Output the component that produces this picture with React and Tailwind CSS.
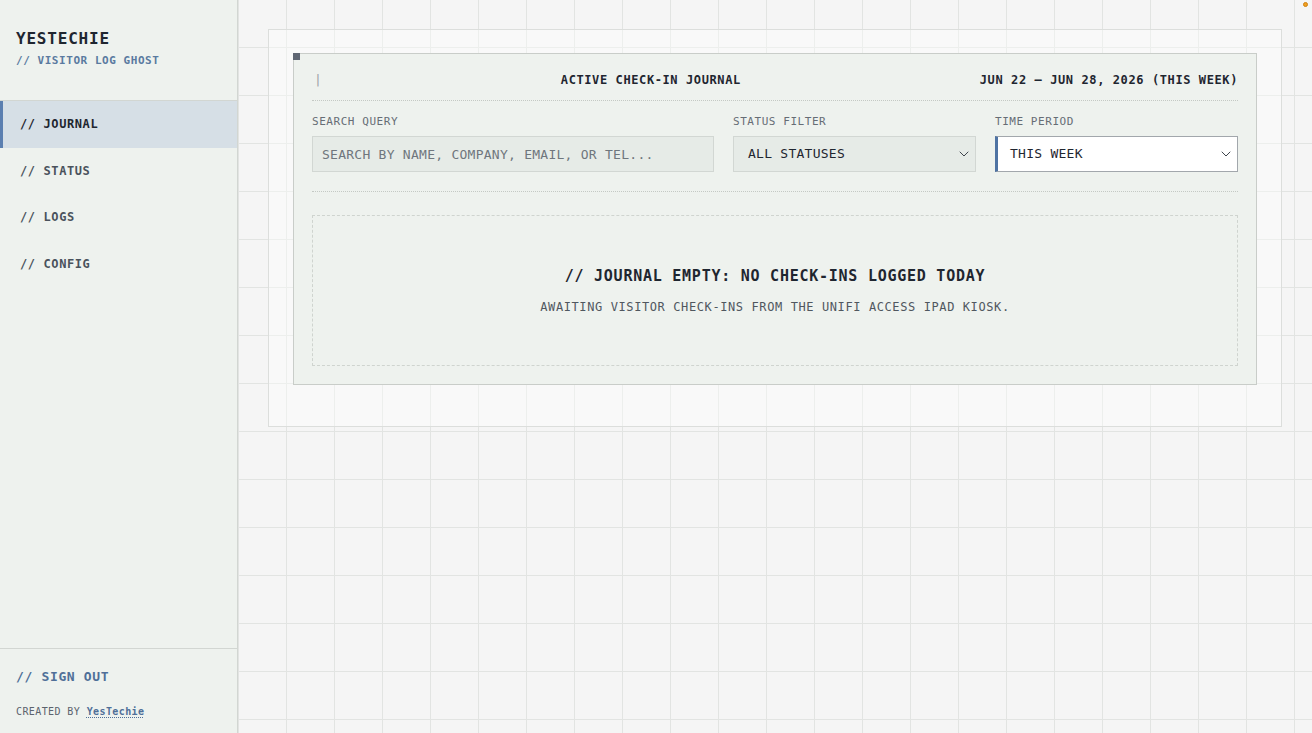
import React from "react";
import { ChevronDown } from "lucide-react";

const NAV = ["JOURNAL", "STATUS", "LOGS", "CONFIG"];

const App = () => {
  return (
    <div className="h-screen w-full flex overflow-hidden font-['DejaVu_Sans_Mono',monospace] text-[#1f2630]">
      {/* Sidebar */}
      <aside className="w-[238px] shrink-0 h-full flex flex-col bg-[#eef2ee] border-r border-[#d2d6d2]">
        <div className="pt-[29px] px-4 pb-[32px] border-b border-[#d2d6d2]">
          <h1 className="text-[16px] leading-[20px] font-bold tracking-[0.05em] text-[#1f2630]">
            YESTECHIE
          </h1>
          <p className="mt-[5px] text-[11px] leading-[14px] font-bold tracking-[0.05em] text-[#5a7aa0]">
            // VISITOR LOG GHOST
          </p>
        </div>
        <nav className="flex flex-col">
          {NAV.map((item, i) => (
            <div
              key={item}
              className={
                i === 0
                  ? "h-[46.5px] flex items-center pl-[17px] pr-5 text-[12px] font-bold tracking-[0.05em] text-[#1f2630] bg-[#d6dfe6] border-l-[3px] border-[#5b7fb0]"
                  : "h-[46.5px] flex items-center px-5 text-[12px] font-bold tracking-[0.05em] text-[#4a525c]"
              }
            >
              // {item}
            </div>
          ))}
        </nav>
        <div className="mt-auto border-t border-[#d2d6d2] px-4 pt-[20px] pb-[15px]">
          <div className="text-[13px] leading-[16px] font-bold tracking-[0.05em] text-[#4f6f98]">
            // SIGN OUT
          </div>
          <div className="mt-[21px] text-[10px] leading-[12px] tracking-[0.04em] text-[#5b636d]">
            CREATED BY{" "}
            <span className="font-bold text-[#4f6f98] underline decoration-dotted underline-offset-2">
              YesTechie
            </span>
          </div>
        </div>
      </aside>

      {/* Main */}
      <main className="relative flex-1 h-full bg-[#f5f5f5] bg-[linear-gradient(to_right,#e2e4e2_1px,transparent_1px),linear-gradient(to_bottom,#e2e4e2_1px,transparent_1px)] bg-[size:48px_48px] bg-[position:0px_-1px] pt-[29px] px-[30px]">
        <span className="absolute top-[2px] right-[4px] w-[5px] h-[5px] rounded-full bg-[#f0a020] border border-[#d08010]" />

        <div className="border border-[#dcdedc] bg-white/40 px-6 pt-[23px] pb-[41px]">
          <section className="relative bg-[#eef2ee] border border-[#c9cdc9] p-[18px]">
            <span className="absolute -top-px -left-px w-[7px] h-[7px] bg-[#5f6673]" />

            {/* Header */}
            <div className="flex items-center justify-between pb-3 border-b border-dotted border-[#c4c9c4]">
              <span className="text-[13px] leading-[16px] text-[#9ea4aa] pl-[2px]">|</span>
              <span className="text-[12px] leading-[16px] font-bold tracking-[0.05em]">
                ACTIVE CHECK-IN JOURNAL
              </span>
              <span className="text-[12px] leading-[16px] font-bold tracking-[0.05em]">
                JUN 22 – JUN 28, 2026 (THIS WEEK)
              </span>
            </div>

            {/* Filters */}
            <div className="grid grid-cols-[402px_1fr_1fr] gap-x-[19px] pt-[14px] pb-[19px] border-b border-dotted border-[#c4c9c4]">
              <div className="flex flex-col">
                <label className="text-[11px] leading-[14px] tracking-[0.05em] text-[#666d75] mb-[7px]">
                  SEARCH QUERY
                </label>
                <input
                  placeholder="SEARCH BY NAME, COMPANY, EMAIL, OR TEL..."
                  className="h-[36px] px-[9px] bg-[#e6ebe7] border border-[#d2d7d3] text-[13px] tracking-[0.02em] outline-none placeholder:text-[#6f767d]"
                />
              </div>
              <div className="flex flex-col">
                <label className="text-[11px] leading-[14px] tracking-[0.05em] text-[#666d75] mb-[7px]">
                  STATUS FILTER
                </label>
                <div className="h-[36px] pl-[14px] pr-[3px] flex items-center justify-between bg-[#e6ebe7] border border-[#d2d7d3] text-[13px] tracking-[0.02em] text-[#1f2630]">
                  ALL STATUSES
                  <ChevronDown size={16} strokeWidth={1.5} className="text-[#3f454d]" />
                </div>
              </div>
              <div className="flex flex-col">
                <label className="text-[11px] leading-[14px] tracking-[0.05em] text-[#666d75] mb-[7px]">
                  TIME PERIOD
                </label>
                <div className="h-[36px] pl-[12px] pr-[3px] flex items-center justify-between bg-white border border-[#a2a7ac] border-l-[3px] border-l-[#4f73a3] text-[13px] tracking-[0.02em] text-[#1f2630]">
                  THIS WEEK
                  <ChevronDown size={16} strokeWidth={1.5} className="text-[#3f454d]" />
                </div>
              </div>
            </div>

            {/* Empty state */}
            <div className="mt-[23px] h-[151px] border border-dashed border-[#cfd4cf] flex flex-col items-center justify-center">
              <h2 className="text-[15px] leading-[20px] font-bold tracking-[0.05em] text-[#1f2630]">
                // JOURNAL EMPTY: NO CHECK-INS LOGGED TODAY
              </h2>
              <p className="mt-[13px] text-[12px] leading-[16px] tracking-[0.05em] text-[#50575f]">
                AWAITING VISITOR CHECK-INS FROM THE UNIFI ACCESS IPAD KIOSK.
              </p>
            </div>
          </section>
        </div>
      </main>
    </div>
  );
};

export default App;
